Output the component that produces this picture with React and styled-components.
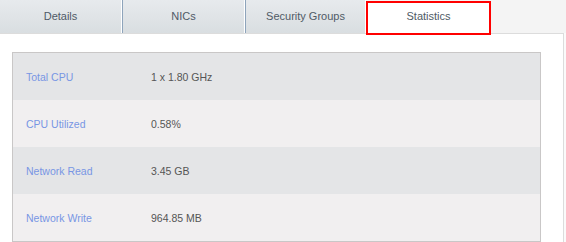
import React from "react";
import styled, { createGlobalStyle } from "styled-components";

const GlobalStyle = createGlobalStyle`
  html, body {
    margin: 0;
    padding: 0;
    background: #fafafa;
    font-family: "Liberation Sans", Arial, sans-serif;
  }
`;

const Page = styled.div`
  width: 566px;
  height: 242px;
  overflow: hidden;
  background: #fafafa;
`;

const TabBar = styled.div`
  display: flex;
  align-items: flex-start;
  height: 33px;
  background: #f4f4f4;
`;

const Tab = styled.div`
  box-sizing: border-box;
  width: ${(p) => p.$w}px;
  height: 33px;
  padding-bottom: 2px;
  display: flex;
  align-items: center;
  justify-content: center;
  font-size: 11px;
  color: #4f5a66;
  background: linear-gradient(#e7eaed, #d9dee1);
  border-left: ${(p) => (p.$first ? "none" : "1px solid #8ea4bb")};
  border-right: 1px solid #ffffff;
  cursor: pointer;
`;

const ActiveTab = styled.div`
  position: relative;
  z-index: 1;
  box-sizing: border-box;
  width: 125px;
  height: 34px;
  margin-top: 1px;
  padding-bottom: 4px;
  display: flex;
  align-items: center;
  justify-content: center;
  font-size: 11px;
  color: #4f5a66;
  background: #ffffff;
  border: 2px solid #ff0000;
`;

const Panel = styled.div`
  box-sizing: border-box;
  width: 564px;
  height: 209px;
  background: #ffffff;
  border-top: 1px solid #dcdcdc;
  border-right: 1px solid #dcdcdc;
  padding: 18px 22px 0 12px;
`;

const Table = styled.div`
  border: 1px solid #c9c7c7;
  border-bottom-width: 2px;
`;

const Row = styled.div`
  display: flex;
  align-items: center;
  height: 47px;
  background: ${(p) => (p.$odd ? "#f1eff0" : "#e4e5e7")};
  font-size: 10.5px;
`;

const Label = styled.div`
  width: 125px;
  padding-left: 13px;
  color: #7896e4;
`;

const Value = styled.div`
  color: #555555;
`;

const tabs = [
  { name: "Details", w: 122, first: true },
  { name: "NICs", w: 123 },
  { name: "Security Groups", w: 121 },
];

const stats = [
  ["Total CPU", "1 x 1.80 GHz"],
  ["CPU Utilized", "0.58%"],
  ["Network Read", "3.45 GB"],
  ["Network Write", "964.85 MB"],
];

export default function App() {
  return (
    <Page>
      <GlobalStyle />
      <TabBar>
        {tabs.map((t) => (
          <Tab key={t.name} $w={t.w} $first={t.first}>
            {t.name}
          </Tab>
        ))}
        <ActiveTab>Statistics</ActiveTab>
      </TabBar>
      <Panel>
        <Table>
          {stats.map(([label, value], i) => (
            <Row key={label} $odd={i % 2 === 1}>
              <Label>{label}</Label>
              <Value>{value}</Value>
            </Row>
          ))}
        </Table>
      </Panel>
    </Page>
  );
}
